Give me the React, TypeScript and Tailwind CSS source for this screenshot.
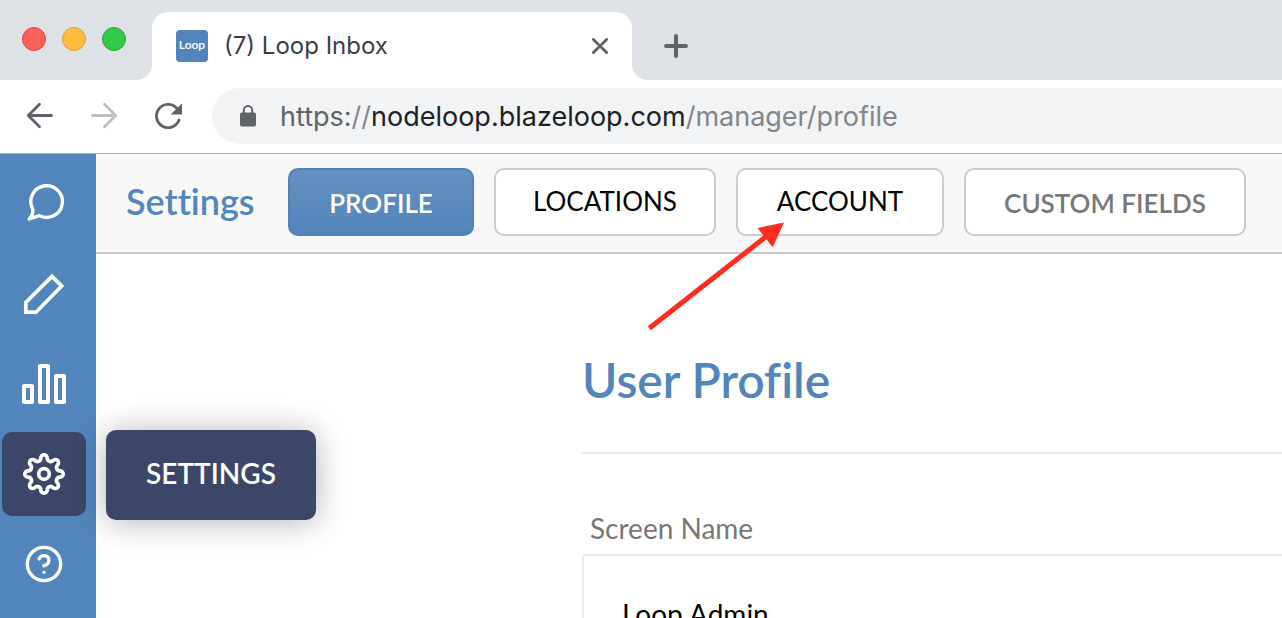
import { CircleQuestionMark } from "lucide-react";

const uiFont = "font-['Lato','Liberation_Sans',sans-serif] [font-variant-ligatures:none]";
const chromeFont = "font-['Inter','Liberation_Sans',sans-serif]";

// eight round teeth, each one an outer arc followed by the valley to the next
function gearPath() {
  const rotate = (x: number, y: number, k: number) => {
    const a = (k * Math.PI) / 4;
    const px = x * Math.cos(a) - y * Math.sin(a) + 24;
    const py = x * Math.sin(a) + y * Math.cos(a) + 24;
    return `${px.toFixed(2)} ${py.toFixed(2)}`;
  };
  let d = `M${rotate(-3.2, -16, 0)}`;
  for (let k = 0; k < 8; k++) {
    d += `A3.2 3.2 0 0 1 ${rotate(3.2, -16, k)}`;
    d += `A3.4 3.4 0 0 0 ${rotate(-3.2, -16, k + 1)}`;
  }
  return d + "Z";
}

function ChatIcon() {
  return (
    <svg className="size-12" viewBox="0 0 48 48" fill="none" stroke="currentColor" strokeWidth="3.4" strokeLinejoin="round">
      <path d="M12.8 29.2A15.8 15.8 0 1 1 19.6 35.7L9.2 38.9Q13.4 34 12.8 29.2Z" />
    </svg>
  );
}

function PencilIcon() {
  return (
    <svg className="size-12" viewBox="0 0 48 48" fill="none" stroke="currentColor" strokeWidth="3.7">
      <path d="M32 6.4L41.6 16L16 42.2H5.8V32.4Z" />
    </svg>
  );
}

function ChartIcon() {
  return (
    <svg className="size-12" viewBox="0 0 48 48" fill="none" stroke="currentColor" strokeWidth="4" strokeLinejoin="round">
      <path d="M4 26h8v16h-8zM20 6h8v36h-8zM36 16h8v26h-8z" />
    </svg>
  );
}

function GearIcon() {
  return (
    <svg className="size-12" viewBox="0 0 48 48" fill="none" stroke="currentColor" strokeWidth="3.7" strokeLinejoin="round">
      <path d={gearPath()} />
      <circle cx="24" cy="24" r="5.3" />
    </svg>
  );
}

function BrowserTabs() {
  return (
    <div className="flex h-20 bg-white">
      <div className="flex w-[152px] shrink-0 gap-4 rounded-br-2xl bg-[#dee1e6] pt-[27px] pl-[22px]">
        <button aria-label="Close window" className="size-6 rounded-full border border-[#e2443f] bg-[#fc605c]" />
        <button aria-label="Minimize window" className="size-6 rounded-full border border-[#dfa033] bg-[#fdbc40]" />
        <button aria-label="Zoom window" className="size-6 rounded-full border border-[#27aa35] bg-[#34c84a]" />
      </div>
      <div className="w-[480px] shrink-0 bg-[#dee1e6] pt-3">
        <div className="flex h-full items-center rounded-t-2xl bg-white px-6">
          <span className="flex size-8 items-center justify-center rounded-sm bg-[#5285bb] pb-0.5 font-['Lato',sans-serif] text-xs font-semibold text-white">
            Loop
          </span>
          <span className="ml-4 flex-1 text-2xl text-[#3c4043]">(7) Loop Inbox</span>
          <button aria-label="Close tab" className="text-[#5f6368]">
            <svg className="size-4" viewBox="0 0 16 16" stroke="currentColor" strokeWidth="2.8" strokeLinecap="round">
              <path d="M1.4 1.4l13.2 13.2M14.6 1.4L1.4 14.6" />
            </svg>
          </button>
        </div>
      </div>
      <div className="flex flex-1 items-center rounded-bl-2xl bg-[#dee1e6] pt-3 pl-8">
        <button aria-label="New tab" className="text-[#5f6368]">
          <svg className="size-6" viewBox="0 0 24 24" stroke="currentColor" strokeWidth="4" strokeLinecap="round">
            <path d="M12 2v20M2 12h20" />
          </svg>
        </button>
      </div>
    </div>
  );
}

function AddressBar() {
  return (
    <div className="flex h-[74px] items-center border-b border-[#b1b3b5] bg-white pb-px pl-6 text-[#5f6368]">
      <button aria-label="Back">
        <svg className="size-8" viewBox="0 0 32 32" fill="none" stroke="currentColor" strokeWidth="2.8" strokeLinecap="round" strokeLinejoin="round">
          <path d="M27.5 15.5H4.5M15.5 4.3L4.3 15.5l11.2 11.2" />
        </svg>
      </button>
      <button aria-label="Forward" className="ml-8 text-[#bdbebf]">
        <svg className="size-8" viewBox="0 0 32 32" fill="none" stroke="currentColor" strokeWidth="2.8" strokeLinecap="round" strokeLinejoin="round">
          <path d="M4.5 15.5h23M16.5 4.3L27.7 15.5 16.5 26.7" />
        </svg>
      </button>
      <button aria-label="Reload" className="ml-8">
        <svg className="size-8" viewBox="0 0 32 32" fill="none">
          <path d="M27 20A11.6 11.6 0 1 1 24.5 8" stroke="currentColor" strokeWidth="2.9" strokeLinecap="round" />
          <path d="M30 3.3V14.6H18.7Z" fill="currentColor" />
        </svg>
      </button>
      <div className="ml-7 flex h-14 flex-1 items-center rounded-l-full bg-[#f1f3f4] pl-7">
        <svg className="h-[22px] w-4" viewBox="0 0 16 22" fill="none">
          <path d="M3.8 9V5.2a4.2 4.2 0 0 1 8.4 0V9" stroke="currentColor" strokeWidth="2" />
          <rect y="7.5" width="16" height="14" rx="2" fill="currentColor" />
        </svg>
        <div role="textbox" aria-label="Address" className="ml-6 pt-0.5 text-[27px] leading-9 whitespace-nowrap">
          https:<span className="text-[#80868b]">//</span>
          <span className="text-[#202124]">nodeloop.blazeloop.com</span>
          <span className="text-[#80868b]">/manager/profile</span>
        </div>
      </div>
    </div>
  );
}

function Sidebar() {
  const item = "flex size-[84px] items-center justify-center rounded-[10px]";
  return (
    <nav className="relative flex w-24 shrink-0 flex-col gap-1.5 bg-[#5285bb] pt-2 pl-0.5 text-white">
      <button aria-label="Inbox" className={item}>
        <ChatIcon />
      </button>
      <button aria-label="Compose" className={item}>
        <PencilIcon />
      </button>
      <button aria-label="Reports" className={item}>
        <ChartIcon />
      </button>
      <div className="relative">
        <button aria-label="Settings" className={`${item} bg-[#3c4668]`}>
          <GearIcon />
        </button>
        <div
          role="tooltip"
          className="absolute -top-0.5 left-[104px] z-10 flex h-[90px] w-[210px] items-center justify-center rounded-[10px] bg-[#3c4668] pb-1 text-[28px] font-semibold shadow-[0_2px_32px_rgba(0,0,0,0.3)]"
        >
          SETTINGS
        </div>
      </div>
      <button aria-label="Help" className={item}>
        <CircleQuestionMark size={40} />
      </button>
    </nav>
  );
}

function SettingsBar() {
  const plain = "h-[68px] rounded-[10px] border-2 border-[#cbcbcb] bg-white";
  return (
    <header className="flex h-[100px] shrink-0 items-center border-b-2 border-[#c9c9c9] bg-[#f7f7f7] pb-0.5 pl-[30px] text-[26px] whitespace-nowrap">
      <h1 className="w-[162px] pb-0.5 text-[36px] font-semibold text-[#5285bb]">Settings</h1>
      <div className="flex gap-5">
        <button className="h-[68px] w-[186px] rounded-[10px] border-2 border-[#4f82ba] bg-linear-to-b from-[#6690c2] to-[#5285bb] pt-0.5 font-semibold text-white">
          PROFILE
        </button>
        <button className={`${plain} w-[222px] pb-0.5 text-black`}>LOCATIONS</button>
        <div className="relative">
          <button className={`${plain} w-[208px] pb-0.5 text-black`}>ACCOUNT</button>
          <svg className="pointer-events-none absolute top-[54px] -left-[90px] h-[110px] w-[138px]" viewBox="646 222 138 110">
            <path d="M649.3 328.3L768 235" stroke="#ff2b1d" strokeWidth="5" />
            <path d="M784 222.5L757.6 228L772.7 247.3Z" fill="#ff2b1d" />
          </svg>
        </div>
        <button className={`${plain} w-[282px] pt-0.5 font-semibold text-[#777]`}>CUSTOM FIELDS</button>
      </div>
    </header>
  );
}

export default function App() {
  return (
    <div className={`flex h-screen flex-col overflow-hidden bg-white ${chromeFont}`}>
      <BrowserTabs />
      <AddressBar />
      <div className={`flex min-h-0 flex-1 ${uiFont}`}>
        <Sidebar />
        <div className="flex min-w-0 flex-1 flex-col">
          <SettingsBar />
          <main className="min-h-0 flex-1 overflow-hidden pt-[98px] pl-[486px]">
            <h2 className="border-b-2 border-[#ebebeb] pb-11 text-5xl leading-[56px] font-semibold text-[#5285bb]">User Profile</h2>
            <label htmlFor="screen-name" className="mt-14 block pl-2 text-[28px] leading-9 text-[#777]">
              Screen Name
            </label>
            <input
              id="screen-name"
              defaultValue="Loop Admin"
              className="mt-2 h-[120px] w-full rounded-l border-2 border-r-0 border-[#ebebeb] px-[38px] text-[28px] text-black outline-none"
            />
          </main>
        </div>
      </div>
    </div>
  );
}
